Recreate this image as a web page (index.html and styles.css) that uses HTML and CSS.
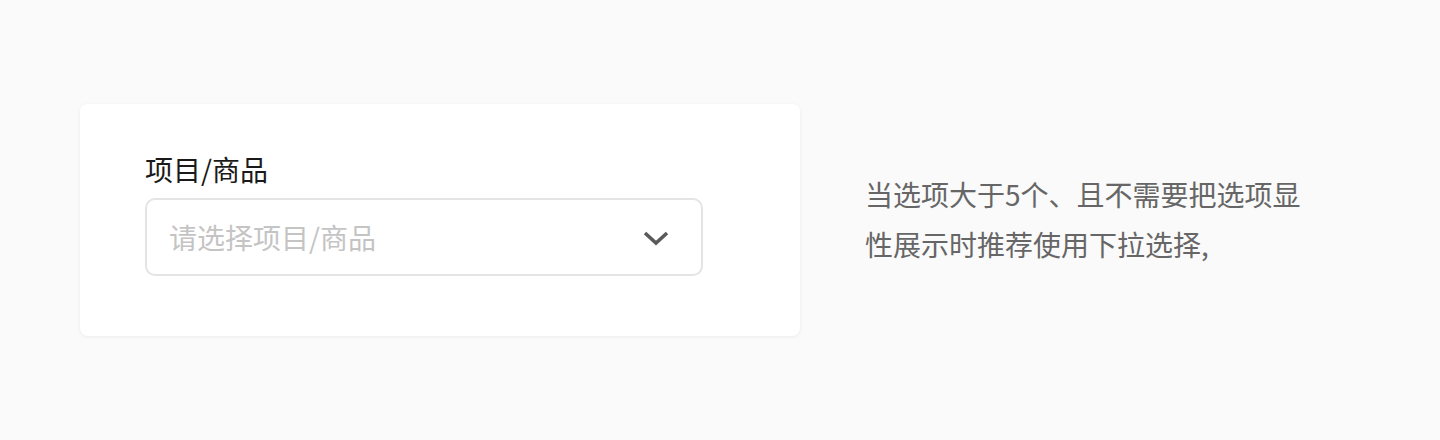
FILE: index.html
```html
<!DOCTYPE html>
<html lang="zh-CN">
<head>
<meta charset="utf-8">
<link rel="stylesheet" href="styles.css">
</head>
<body>
<main class="page">
  <section class="card">
    <label class="field-label">项目/商品</label>
    <div class="select">
      <span class="placeholder">请选择项目/商品</span>
      <svg class="chevron" width="26" height="18" viewBox="0 0 26 18"><path d="M2 4 L13 14 L24 4" fill="none" stroke="#5a5a5a" stroke-width="3.6" stroke-linecap="butt" stroke-linejoin="miter"/></svg>
    </div>
  </section>
  <p class="note">当选项大于5个、且不需要把选项显<br>性展示时推荐使用下拉选择,</p>
</main>
</body>
</html>
```
FILE: styles.css
```css
* { box-sizing: border-box; }
html, body { margin: 0; padding: 0; }
body {
  background: #fafafa;
  font-family: "Noto Sans CJK SC", "Noto Sans", sans-serif;
  width: 1440px;
  height: 440px;
  overflow: hidden;
}
.page {
  display: flex;
  align-items: center;
  padding: 104px 0 0 80px;
  gap: 65px;
}
.card {
  width: 720px;
  height: 232px;
  background: #fff;
  border-radius: 8px;
  box-shadow: 0 1px 4px rgba(0,0,0,0.06);
  padding: 45px 97px 0 65px;
  display: flex;
  flex-direction: column;
}
.field-label {
  font-size: 28px;
  line-height: 40px;
  color: #1a1a1a;
  margin-bottom: 9px;
}
.select {
  height: 78px;
  border: 2px solid #e4e4e4;
  border-radius: 10px;
  display: flex;
  align-items: center;
  justify-content: space-between;
  padding: 0 32px 0 22px;
  background: #fff;
}
.placeholder {
  font-size: 28px;
  color: #c4c4c4;
  line-height: 40px;
}
.chevron { display: block; margin-top: 2px; }
.note {
  margin: -2px 0 0;
  font-size: 28px;
  line-height: 50px;
  color: #666;
}
```
